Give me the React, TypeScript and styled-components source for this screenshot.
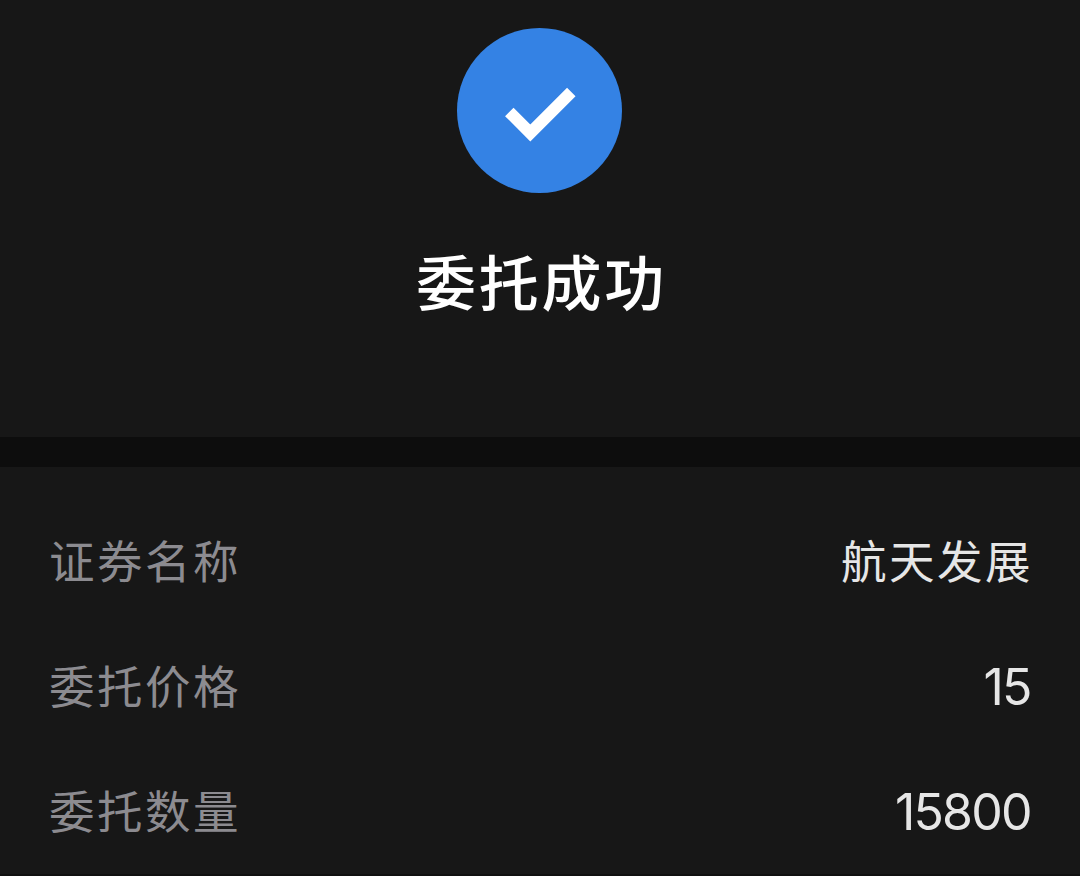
import React from "react";
import styled, { createGlobalStyle } from "styled-components";

const rows = [
  { label: "证券名称", value: "航天发展" },
  { label: "委托价格", value: "15", number: true },
  { label: "委托数量", value: "15800", number: true },
];

const App = () => {
  return (
    <Container>
      <GlobalStyle />
      <Result>
        <CheckCircle>
          <svg width="165" height="165" viewBox="0 0 165 165">
            <path
              d="M52.3 83.9 L73.3 104.9 L114.3 63.9"
              fill="none"
              stroke="#fff"
              strokeWidth="12"
            />
          </svg>
        </CheckCircle>
        <Title>委托成功</Title>
      </Result>
      <Divider />
      <Detail>
        {rows.map((row) => (
          <Row key={row.label}>
            <Label>{row.label}</Label>
            {row.number ? (
              <NumberValue>{row.value}</NumberValue>
            ) : (
              <Value>{row.value}</Value>
            )}
          </Row>
        ))}
      </Detail>
      <BottomLine />
    </Container>
  );
};

const GlobalStyle = createGlobalStyle`
  body {
    margin: 0;
    background-color: #171717;
  }
`;

const Container = styled.div`
  height: 876px;
  display: flex;
  flex-direction: column;
  overflow: hidden;
  background-color: #171717;
  font-family: "Noto Sans CJK SC", sans-serif;
`;

const Result = styled.section`
  height: 436.5px;
  box-sizing: border-box;
  padding-top: 28.4px;
  display: flex;
  flex-direction: column;
  align-items: center;
`;

const CheckCircle = styled.div`
  width: 165px;
  height: 165px;
  margin-right: 1px;
  border-radius: 50%;
  background-color: #3482e4;
`;

const Title = styled.h1`
  margin: 41.6px 0 0;
  padding-left: 3px;
  font-size: 60px;
  line-height: 90px;
  letter-spacing: 2.8px;
  font-weight: 500;
  color: #fff;
`;

const Divider = styled.div`
  height: 30px;
  background-color: #0d0d0d;
`;

const Detail = styled.section`
  flex: 1;
  padding: 29.5px 48px 0 49px;
`;

const Row = styled.div`
  height: 125px;
  display: flex;
  justify-content: space-between;
  align-items: center;
`;

const Label = styled.span`
  font-size: 45.5px;
  letter-spacing: 2.5px;
  color: #8c8b90;
`;

const Value = styled.span`
  margin-right: -1px;
  font-size: 45.5px;
  letter-spacing: 2.5px;
  color: #e6e6e6;
`;

const NumberValue = styled.span`
  padding-top: 6px;
  margin-right: 1.3px;
  font-family: Inter, sans-serif;
  font-size: 50px;
  line-height: 60px;
  letter-spacing: -1.8px;
  color: #e6e6e6;
`;

const BottomLine = styled.div`
  height: 2px;
  background-color: #101010;
`;

export default App;
